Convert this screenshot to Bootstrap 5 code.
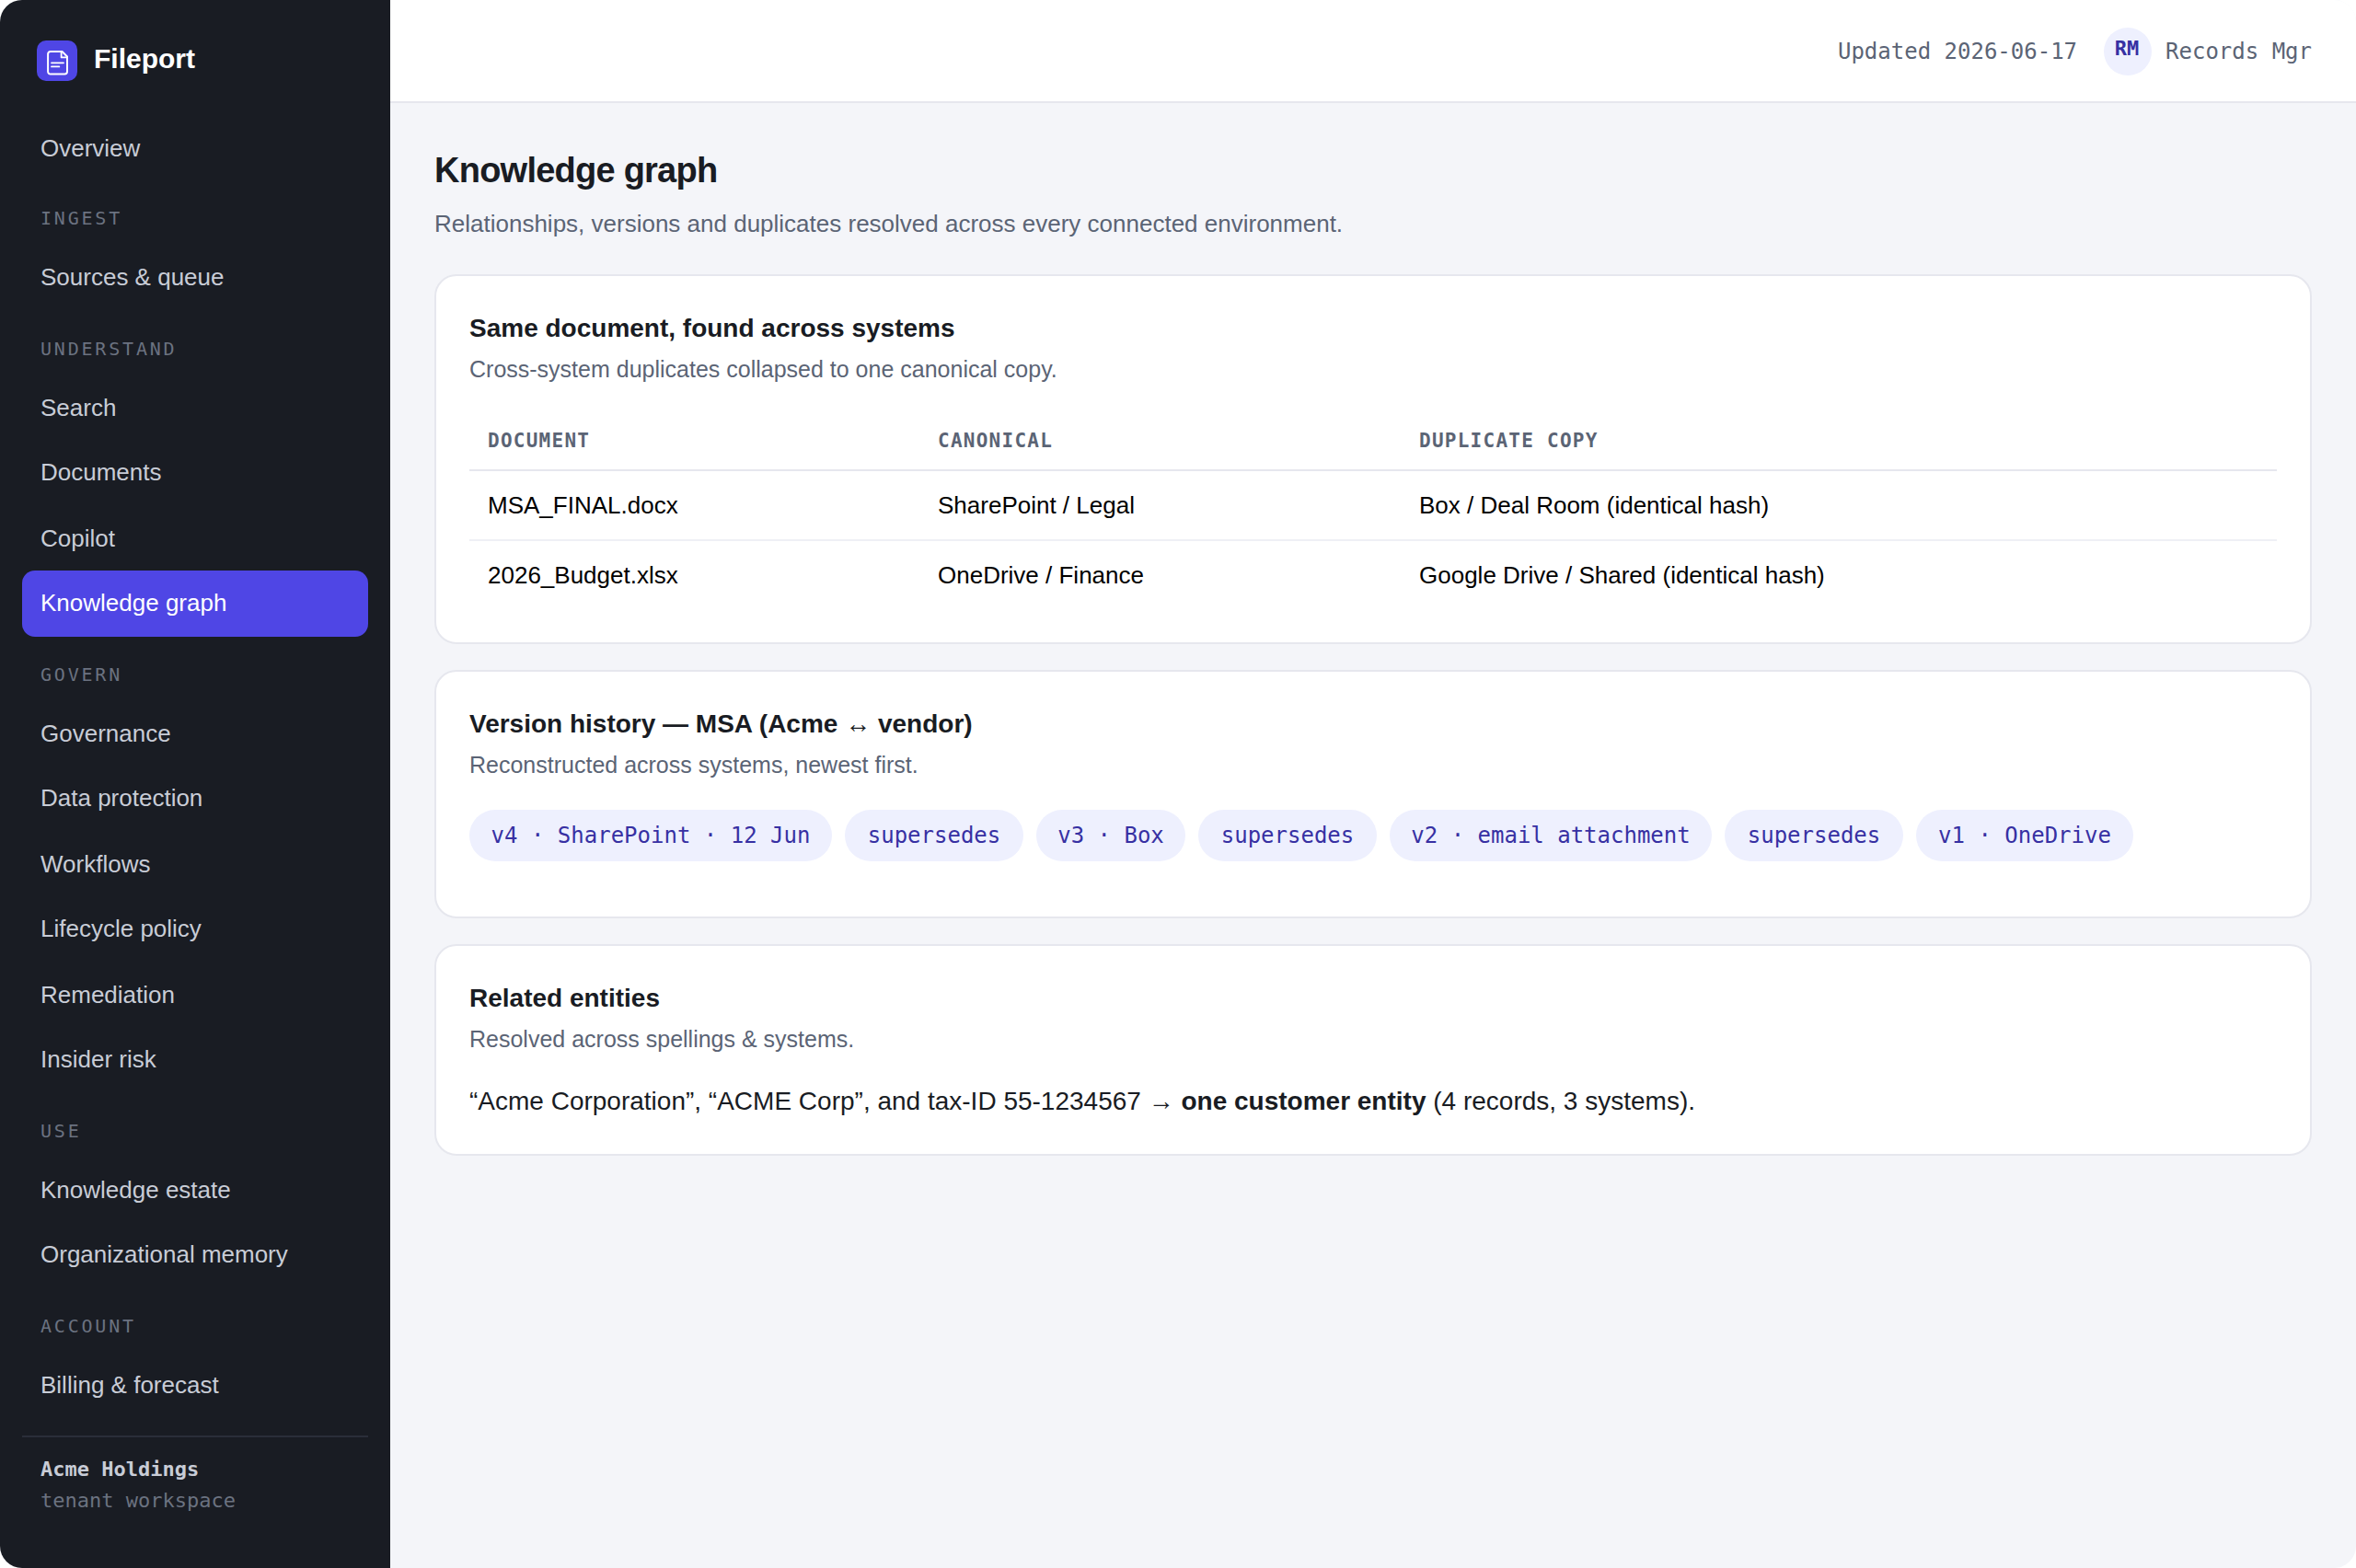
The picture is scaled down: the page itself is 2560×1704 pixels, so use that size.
<!DOCTYPE html>
<html lang="en">
<head>
<meta charset="utf-8">
<title>Fileport – Knowledge graph</title>
<meta name="viewport" content="width=device-width, initial-scale=1">
<link href="https://cdn.jsdelivr.net/npm/bootstrap@5.3.0/dist/css/bootstrap.min.css" rel="stylesheet">
<style>
  :root { --ink:#191c23; --brand:#4f46e5; --muted:#5b6475; --line:#e6e7ee; --tint:#eef0fe; --tint-ink:#3730a3; }
  body { font-family:"Liberation Sans",Arial,sans-serif; font-size:28px; line-height:1.5; color:var(--ink); background:#fff; }
  .mono { font-family:"DejaVu Sans Mono",monospace; }
  .shell { height:1704px; border-radius:24px; background:#f4f5f9; }
  .side { width:424px; background:var(--ink); padding:44px 24px 0; }
  .brand { height:82px; padding-left:16px; gap:18px; }
  .brand-tile { width:44px; height:44px; border-radius:10px; background:var(--brand); }
  .brand-name { font-size:30px; line-height:40px; color:#fff; }
  .side-link { height:70px; padding:16px 20px 0; font-size:26px; line-height:39px; color:#c8ccd6; text-decoration:none; border-radius:14px; white-space:nowrap; }
  .side-link:nth-of-type(even) { height:72px; }
  .side-link.active { background:var(--brand); color:#fff; }
  .side-label { height:70px; padding:26px 20px 0; font-size:20px; line-height:30px; letter-spacing:.14em; color:#6b7280; }
  .tenant { margin-top:20px; border-top:2px solid #2a2e39; padding:18px 20px 0; font-size:22px; line-height:34px; color:#6b7280; }
  .tenant strong { color:#c8ccd6; }
  .topbar { height:112px; background:#fff; border-bottom:2px solid var(--line); padding:2px 48px 0; font-size:24px; line-height:36px; color:var(--muted); }
  .avatar { width:52px; height:52px; margin:0 15px 0 29px; padding-right:2px; background:var(--tint); color:var(--tint-ink); font-size:22px; line-height:46px; }
  .page { padding:47px 48px 0; }
  .page-title { font-size:38px; line-height:52px; letter-spacing:-.02em; margin:0; }
  .page-sub { font-size:26px; line-height:40px; color:var(--muted); margin:12px 0 35px; }
  .panel { border:2px solid var(--line); border-radius:24px; padding:36px; margin-bottom:28px; background:#fff; }
  .panel-title { font-size:28px; line-height:42px; margin:0; }
  .panel-sub { font-size:25px; line-height:38px; color:var(--muted); margin:4px 0 0; }
  .panel-text { margin:28px 0 0; }
  .dupes { --bs-table-bg:transparent; --bs-table-color:#000; margin:32px 0 0; font-size:26px; color:#000; table-layout:fixed; border-collapse:separate; border-spacing:0; }
  .dupes .col-doc { width:489px; }
  .dupes .col-canon { width:523px; }
  .dupes th { height:60px; padding:9px 20px 0; font-size:21px; line-height:36px; letter-spacing:.06em; color:var(--muted); border-bottom:2px solid var(--line); vertical-align:top; }
  .dupes td { height:76px; padding:17px 20px 0; line-height:40px; border-bottom:2px solid #eff0f5; }
  .dupes tr:last-child td { border-bottom:0; height:74px; }
  .pills { gap:14px; margin:30px 0 24px; }
  .pill { height:56px; font-size:24px; line-height:56px; background:var(--tint); color:var(--tint-ink); white-space:nowrap; }
  .pill-link { width:194px; }
  .pill-v4 { width:394px; }
  .pill-v3 { width:162px; }
  .pill-v2 { width:350px; }
  .pill-v1 { width:236px; }
</style>
<script src="https://cdn.jsdelivr.net/npm/bootstrap@5.3.0/dist/js/bootstrap.bundle.min.js"></script>
</head>
<body>
<div class="shell d-flex overflow-hidden">
  <nav class="side d-flex flex-column flex-shrink-0">
    <div class="brand d-flex align-items-start">
      <span class="brand-tile d-block flex-shrink-0">
        <svg class="d-block" width="44" height="44" viewBox="0 0 44 44" fill="none" stroke="#fff" stroke-width="2" stroke-linecap="round" stroke-linejoin="round">
          <path d="M14.800 12H27.500L33 17.500V33.800a2.700 2.700 0 0 1-2.700 2.700H14.800a2.700 2.700 0 0 1-2.700-2.700V14.700A2.700 2.700 0 0 1 14.800 12Z"/>
          <path d="M26.600 12.200V18.400H32.800" stroke-width="1.800"/>
          <path d="M16 24.300H29M16 28.400H24.300" stroke-width="1.800"/>
        </svg>
      </span>
      <span class="brand-name fw-bold">Fileport</span>
    </div>
    <a class="side-link d-block" href="#">Overview</a>
    <div class="side-label mono">INGEST</div>
    <a class="side-link d-block" href="#">Sources &amp; queue</a>
    <div class="side-label mono">UNDERSTAND</div>
    <a class="side-link d-block" href="#">Search</a>
    <a class="side-link d-block" href="#">Documents</a>
    <a class="side-link d-block" href="#">Copilot</a>
    <a class="side-link d-block active" href="#">Knowledge graph</a>
    <div class="side-label mono">GOVERN</div>
    <a class="side-link d-block" href="#">Governance</a>
    <a class="side-link d-block" href="#">Data protection</a>
    <a class="side-link d-block" href="#">Workflows</a>
    <a class="side-link d-block" href="#">Lifecycle policy</a>
    <a class="side-link d-block" href="#">Remediation</a>
    <a class="side-link d-block" href="#">Insider risk</a>
    <div class="side-label mono">USE</div>
    <a class="side-link d-block" href="#">Knowledge estate</a>
    <a class="side-link d-block" href="#">Organizational memory</a>
    <div class="side-label mono">ACCOUNT</div>
    <a class="side-link d-block" href="#">Billing &amp; forecast</a>
    <div class="tenant mono"><strong class="d-block">Acme Holdings</strong>tenant workspace</div>
  </nav>
  <div class="flex-grow-1">
    <header class="topbar mono d-flex align-items-center justify-content-end">
      <span>Updated 2026-06-17</span>
      <span class="avatar rounded-circle text-center fw-bold">RM</span>
      <span>Records Mgr</span>
    </header>
    <main class="page">
      <h1 class="page-title fw-bold">Knowledge graph</h1>
      <p class="page-sub">Relationships, versions and duplicates resolved across every connected environment.</p>
      <section class="panel">
        <h2 class="panel-title fw-bold">Same document, found across systems</h2>
        <p class="panel-sub">Cross-system duplicates collapsed to one canonical copy.</p>
        <table class="table dupes">
          <colgroup><col class="col-doc"><col class="col-canon"><col></colgroup>
          <thead><tr class="mono"><th>DOCUMENT</th><th>CANONICAL</th><th>DUPLICATE COPY</th></tr></thead>
          <tbody>
            <tr><td>MSA_FINAL.docx</td><td>SharePoint / Legal</td><td>Box / Deal Room (identical hash)</td></tr>
            <tr><td>2026_Budget.xlsx</td><td>OneDrive / Finance</td><td>Google Drive / Shared (identical hash)</td></tr>
          </tbody>
        </table>
      </section>
      <section class="panel">
        <h2 class="panel-title fw-bold">Version history — MSA (Acme ↔ vendor)</h2>
        <p class="panel-sub">Reconstructed across systems, newest first.</p>
        <div class="pills d-flex mono text-center">
          <span class="pill pill-v4 rounded-pill">v4 · SharePoint · 12 Jun</span>
          <span class="pill pill-link rounded-pill">supersedes</span>
          <span class="pill pill-v3 rounded-pill">v3 · Box</span>
          <span class="pill pill-link rounded-pill">supersedes</span>
          <span class="pill pill-v2 rounded-pill">v2 · email attachment</span>
          <span class="pill pill-link rounded-pill">supersedes</span>
          <span class="pill pill-v1 rounded-pill">v1 · OneDrive</span>
        </div>
      </section>
      <section class="panel">
        <h2 class="panel-title fw-bold">Related entities</h2>
        <p class="panel-sub">Resolved across spellings &amp; systems.</p>
        <p class="panel-text">“Acme Corporation”, “ACME Corp”, and tax-ID 55-1234567 → <b>one customer entity</b> (4 records, 3 systems).</p>
      </section>
    </main>
  </div>
</div>
</body>
</html>
